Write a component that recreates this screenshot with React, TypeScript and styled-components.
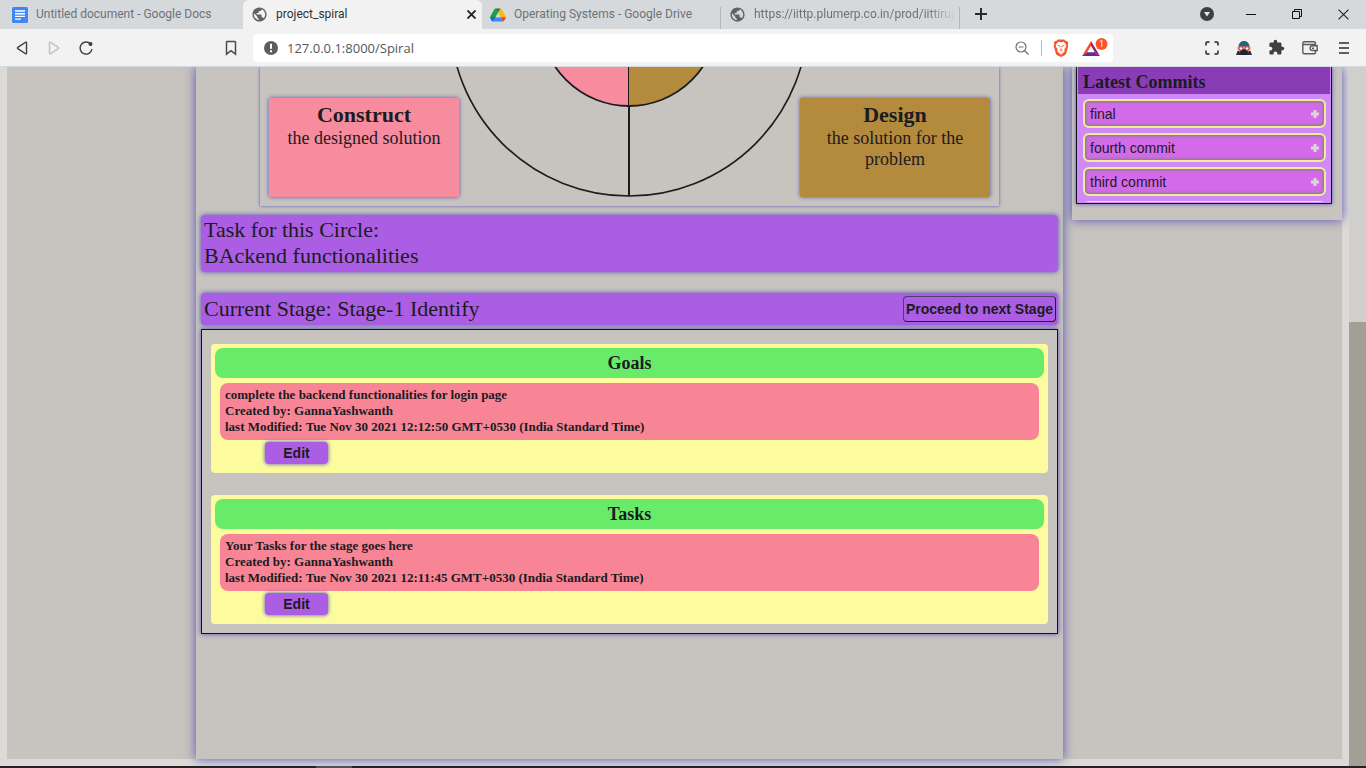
import React from "react";
import styled, { createGlobalStyle } from "styled-components";
import { MdExtension, MdPublic } from "react-icons/md";

const SERIF = '"Liberation Serif", "Times New Roman", serif';
const SANS = '"Liberation Sans", Arial, sans-serif';
const UI = '"Open Sans", "Noto Sans", sans-serif';
const TAB_FONT = 'Roboto, "Open Sans", sans-serif';

const c = {
  ink: "#1b1b22",
  stone: "#c7c3be",
  pale: "#dbdad6",
  glow: "#5450b8",
  purple: "#ab5ee3",
  pink: "#f78c9e",
  gold: "#b48a3c",
};

const GlobalStyle = createGlobalStyle`
  * { box-sizing: border-box; }
  body { margin: 0; color: ${c.ink}; font-family: ${SERIF}; background: ${c.pale}; }
  h1, h2, h3, p { margin: 0; }
  button { font: inherit; color: inherit; cursor: pointer; }
`;

const Screen = styled.div`
  display: flex;
  flex-direction: column;
  height: 100vh;
  overflow: hidden;
`;

/* ---------- browser frame ---------- */

const TabStrip = styled.div`
  display: flex;
  flex: none;
  height: 29px;
  padding-left: 4px;
  background: #d5d9dc;
`;

const Tab = styled.div<{ $active?: boolean; $divider?: boolean }>`
  display: flex;
  align-items: center;
  flex: 0 1 239px;
  min-width: 0;
  padding: 0 5px 0 8px;
  border-radius: 6px 6px 0 0;
  background: ${(p) => (p.$active ? "#f2f2f2" : "transparent")};
  background-image: ${(p) =>
    p.$divider ? "linear-gradient(#b3b7ba, #b3b7ba)" : "none"};
  background-size: 1px 22px;
  background-position: right bottom;
  background-repeat: no-repeat;
`;

const TabButton = styled.button<{ $active?: boolean; $fade?: boolean }>`
  display: flex;
  align-items: center;
  flex: 1;
  gap: 8px;
  min-width: 0;
  height: 29px;
  padding: 0;
  border: 0;
  background: none;
  overflow: hidden;
  white-space: nowrap;
  font: 12px/29px ${TAB_FONT};
  color: ${(p) => (p.$active ? "#2f3235" : "#6d7276")};
  mask-image: ${(p) =>
    p.$fade ? "linear-gradient(to right, #000 88%, transparent)" : "none"};
  svg { flex: none; }
`;

const IconButton = styled.button<{ $w: number }>`
  display: flex;
  align-items: center;
  justify-content: center;
  flex: none;
  width: ${(p) => p.$w}px;
  height: 28px;
  padding: 0;
  border: 0;
  background: none;
  color: #3c4043;
`;

const WindowControls = styled.div`
  display: flex;
  margin-left: auto;
`;

const Toolbar = styled.div`
  display: flex;
  align-items: center;
  flex: none;
  height: 38px;
  padding: 0 6px;
  background: #f2f2f2;
  border-bottom: 1px solid #d3d9de;
`;

const BookmarkSlot = styled.div`
  margin-left: 115px;
`;

const AddressBar = styled.div`
  display: flex;
  align-items: center;
  flex: 1;
  height: 28px;
  margin: 0 83px 0 8px;
  padding: 0 1px 0 11px;
  border-radius: 4px;
  background: #fff;
`;

const AddressInput = styled.input`
  flex: 1;
  min-width: 0;
  padding: 0 9px;
  border: 0;
  outline: 0;
  background: none;
  color: #53575b;
  font: 13px/20px ${UI};
`;

const AddressDivider = styled.span`
  width: 1px;
  height: 16px;
  margin: 0 2px;
  background: #bbb;
`;

/* ---------- page ---------- */

const Viewport = styled.div`
  display: flex;
  flex: 1;
  min-height: 0;
`;

const Page = styled.div`
  flex: 1;
  min-width: 0;
  padding: 0 7px 7px;
  overflow: hidden;
  background: ${c.pale};
`;

const Columns = styled.div`
  display: grid;
  grid-template-columns: 189fr 876fr 270fr;
  height: 100%;
  background: ${c.stone};
`;

const Main = styled.main`
  grid-column: 2;
  margin-right: 9px;
  padding: 0 5px;
  background: ${c.stone};
  box-shadow: 0 0 10px ${c.glow};
`;

const Spiral = styled.section`
  display: flex;
  align-items: flex-end;
  justify-content: space-between;
  width: 739px;
  max-width: 100%;
  height: 139px;
  margin: 0 auto 9px;
  padding: 0 9px 9px;
  box-shadow: 0 0 3px ${c.glow};
`;

const Quadrant = styled.article<{ $bg: string }>`
  flex: none;
  width: 190px;
  height: 99px;
  padding: 4px 16px;
  border-radius: 2px;
  background: ${(p) => p.$bg};
  box-shadow: 0 0 4px ${c.glow};
  text-align: center;
  font-size: 18px;
  line-height: 21px;
`;

const QuadrantTitle = styled.h2`
  font-size: 22px;
  line-height: 26px;
`;

const Circles = styled.svg`
  flex: none;
  width: 361px;
  height: 130px;
  margin: 0 -10px;
`;

const Banner = styled.section`
  display: flex;
  align-items: center;
  justify-content: space-between;
  padding: 2px 2px 3px 3px;
  border-radius: 4px;
  background: ${c.purple};
  box-shadow: 0 0 5px ${c.glow};
  font-size: 22px;
  line-height: 26px;
`;

const StageBanner = styled(Banner)`
  margin: 21px 0 4px;
  padding: 3px 2px 3px 3px;
`;

const BannerTitle = styled.h1`
  font-size: 22px;
  font-weight: 400;
`;

const ProceedButton = styled.button`
  height: 26px;
  padding: 0 2px;
  border: 1px solid ${c.ink};
  border-top-color: #4b3f66;
  border-left-color: #4b3f66;
  border-radius: 4px;
  background: ${c.purple};
  font: bold 14px/16px ${SANS};
`;

const StageBox = styled.section`
  display: flex;
  flex-direction: column;
  gap: 22px;
  padding: 14px 9px 9px;
  border: 1px solid #12121c;
  box-shadow: 0 0 5px ${c.glow};
`;

const Card = styled.article`
  padding: 4px 4px 9px;
  border-radius: 4px;
  background: #fcfc9f;
`;

const CardTitle = styled.h2`
  border-radius: 8px;
  background: #69eb6a;
  text-align: center;
  font-size: 18px;
  line-height: 30px;
`;

const Entry = styled.div`
  margin: 5px 5px 2px;
  padding: 4px 5px 5px;
  border-radius: 8px;
  background: #f78596;
  font-size: 13px;
  font-weight: 700;
  line-height: 16px;
`;

const EditButton = styled.button`
  display: block;
  width: 63px;
  height: 22px;
  margin-left: 50px;
  padding: 0;
  border: 0;
  border-radius: 4px;
  background: ${c.purple};
  box-shadow: 0 0 4px ${c.glow};
  font: bold 14px/22px ${SANS};
`;

const Aside = styled.aside`
  align-self: start;
  padding: 0 10px 16px 4px;
  background: ${c.stone};
  box-shadow: 0 0 10px ${c.glow};
`;

const Commits = styled.section`
  padding: 0 1px 1px;
  border: 1px solid #12121c;
  border-top: 0;
  background: #d08af7;
  box-shadow: 0 0 4px ${c.glow};
`;

const CommitsTitle = styled.h2`
  padding: 3px 5px 0;
  background: #893cb5;
  font-size: 18px;
  line-height: 24px;
`;

const CommitList = styled.ul`
  display: flex;
  flex-direction: column;
  gap: 5px;
  height: 108px;
  margin: 0;
  padding: 5px 4px 0 5px;
  overflow: hidden;
  list-style: none;
`;

const CommitButton = styled.button`
  display: flex;
  align-items: center;
  justify-content: space-between;
  width: 100%;
  height: 29px;
  padding: 0 5px;
  border: 2px solid #f0ec98;
  border-radius: 6px;
  background: #d36aea;
  box-shadow: inset 0 0 3px 1px #75876f;
  font: 14px/16px ${SANS};
`;

const ScrollTrack = styled.div`
  display: grid;
  grid-template-rows: 255fr 444fr;
  flex: none;
  width: 17px;
  background: #d0cfcc;
`;

const ScrollThumb = styled.div`
  grid-row: 2;
  background: #a39f97;
`;

const Taskbar = styled.div`
  flex: none;
  height: 2px;
  padding-left: 316px;
  background: #222326;
`;

const TaskbarMark = styled.div`
  width: 36px;
  height: 2px;
  background: #505154;
`;

/* ---------- icons ---------- */

const DocsIcon = () => (
  <svg width="16" height="16" viewBox="0 0 16 16">
    <rect width="16" height="16" rx="1.5" fill="#4285f4" />
    <path d="M3 4h10M3 6.7h10M3 9.4h10M3 12.1h6" stroke="#fff" strokeWidth="1.4" />
  </svg>
);

const DriveIcon = () => (
  <svg width="16" height="16" viewBox="0 0 16 16">
    <path d="M5.4 1.5 8 6l-2.400 4.200L3 14.500c-.5-.1-.9-.4-1.200-.8L.3 11c-.3-.5-.3-1 0-1.500L4.300 2.300c.2-.4.600-.7 1.100-.8z" fill="#1e9e4a" />
    <path d="M5.400 1.500h5.200L8 6z" fill="#188038" />
    <path d="M10.600 1.500c.5.100.9.400 1.100.8l4 7.200c.1.200.2.500.2.800h-5.200L8 6z" fill="#fbbc04" />
    <path d="M.1 10.200h5.500L3 14.500c-.5-.1-.9-.4-1.200-.8L.3 11z" fill="#1967d2" />
    <path d="M5.600 10.200h5.100l2.300 4.300H3z" fill="#4285f4" />
    <path d="M10.700 10.200h5.200c0 .3-.1.500-.2.800l-1.500 2.700c-.3.400-.7.700-1.200.8z" fill="#ea4335" />
    <path d="m8 6 2.500 4.200H5.600z" fill="#d5d9dc" />
  </svg>
);

const Globe = () => <MdPublic size={17} color="#5f6368" />;

const CloseIcon = ({ size, weight }: { size: number; weight: number }) => (
  <svg width={size} height={size} viewBox="0 0 10 10">
    <path d="m.5.5 9 9m0-9-9 9" stroke="#202124" strokeWidth={weight} />
  </svg>
);

const PlusIcon = () => (
  <svg width="12" height="12" viewBox="0 0 12 12">
    <path d="M6 0v12M0 6h12" stroke="#27292c" strokeWidth="2" />
  </svg>
);

const TabSearchIcon = () => (
  <svg width="14" height="14" viewBox="0 0 14 14">
    <circle cx="7" cy="7" r="7" fill="#3d3f41" />
    <path d="M4 5h6L7 9.5z" fill="#e6e8ea" />
  </svg>
);

const MinimizeIcon = () => (
  <svg width="10" height="10" viewBox="0 0 10 10">
    <path d="M0 5.5h10" stroke="#111" />
  </svg>
);

const RestoreIcon = () => (
  <svg width="10" height="10" viewBox="0 0 10 10" fill="none" stroke="#111">
    <path d="M.5 2.5h7v7h-7zM2.5 2.500v-2h7v7h-2" />
  </svg>
);

const BackIcon = ({ flip }: { flip?: boolean }) => (
  <svg width="14" height="16" viewBox="0 0 14 16" fill="none">
    <path
      d={
        flip
          ? "M2.500 2.800v10.400c0 .6.600.8 1 .5l7.700-5.100c.4-.3.400-.9 0-1.200L3.500 2.300c-.4-.3-1 0-1 .5z"
          : "M11.500 2.800v10.400c0 .6-.6.8-1 .5L2.800 8.600c-.4-.3-.4-.9 0-1.200l7.700-5.100c.4-.3 1 0 1 .5z"
      }
      stroke={flip ? "#bcbec0" : "#3c3f42"}
      strokeWidth="1.4"
    />
  </svg>
);

const ReloadIcon = () => (
  <svg width="16" height="16" viewBox="0 0 16 16" fill="none">
    <path d="M12.500 4A6 6 0 1 0 14 9" stroke="#3c3f42" strokeWidth="1.4" />
    <circle cx="12.500" cy="4" r="2" fill="#3c3f42" />
  </svg>
);

const BookmarkIcon = () => (
  <svg width="12" height="16" viewBox="0 0 12 16" fill="none">
    <path d="M1.500 2.200c0-.4.300-.7.700-.7h7.600c.4 0 .7.300.7.700v12L6 10.700l-4.500 3.500z" stroke="#4a4d50" strokeWidth="1.5" />
  </svg>
);

const InfoIcon = () => (
  <svg width="14" height="14" viewBox="0 0 14 14">
    <circle cx="7" cy="7" r="7" fill="#5a5e62" />
    <path d="M7 2.800v5M7 9.300v2" stroke="#fff" strokeWidth="2" />
  </svg>
);

const ZoomOutIcon = () => (
  <svg width="14" height="14" viewBox="0 0 14 14" fill="none" stroke="#6a6e72">
    <circle cx="6" cy="6" r="5" strokeWidth="1.2" />
    <path d="M3.500 6h5" />
    <path d="m9.500 9.500 4 4" strokeWidth="1.3" />
  </svg>
);

const BraveIcon = () => (
  <svg width="16" height="18" viewBox="0 0 16 19">
    <path d="M4.500.5h7l1.500 1.700 1.400-.1 1.300 2-.6 1.700.5 1.700-2 7.500c-.3 1-.8 1.500-1.600 2.100L8 19l-4-1.900c-.8-.6-1.300-1.100-1.600-2.100l-2-7.500.5-1.700-.6-1.700 1.300-2 1.400.1z" fill="#fb542b" />
    <path d="m8 3.400 2.500-.5 2.400 2.200.7 2.600-2 3.200.2 2.400L8 16.500l-3.800-3.200.2-2.400-2-3.200.7-2.600 2.400-2.200z" fill="#fff" />
    <path d="m4.500 6.700 2.300.7.200 1.400M11.500 6.700l-2.300.7L9 8.800M6.300 12.600 8 11.600l1.700 1M8 9.500v2" stroke="#fb542b" strokeWidth=".9" fill="none" />
  </svg>
);

const RewardsIcon = () => (
  <svg width="26" height="20" viewBox="0 0 26 20">
    <path d="M9 3v5l-3.600 6L0 18z" fill="#ff4724" />
    <path d="M9 3v5l3.600 6L18 18z" fill="#9e1f63" />
    <path d="m0 18 5.400-4h7.200L18 18z" fill="#662d91" />
    <path d="m9 8 3.500 6.200h-7z" fill="#fff" />
    <circle cx="19.500" cy="6" r="6" fill="#fb542b" />
    <text x="19.500" y="9" fontSize="9" textAnchor="middle" fill="#fff" fontFamily="Open Sans, sans-serif">1</text>
  </svg>
);

const BracketsIcon = () => (
  <svg width="14" height="14" viewBox="0 0 14 14" fill="none" stroke="#222" strokeWidth="1.5">
    <path d="M1 4.500V2.200C1 1.500 1.500 1 2.200 1h2.300M9.500 1h2.300c.7 0 1.200.5 1.200 1.200v2.300M13 9.500v2.300c0 .7-.5 1.200-1.200 1.200H9.500M4.500 13H2.200C1.500 13 1 12.500 1 11.800V9.500" />
  </svg>
);

const AvatarIcon = () => (
  <svg width="16" height="16" viewBox="0 0 16 16">
    <path d="M0 15l1.500-4h13l1.500 4z" fill="#2c333d" />
    <path d="M2.300 8C2.300 3.500 4.700 1 8 1s5.700 2.500 5.700 7z" fill="#27647a" />
    <path d="M1.500 6.500h13V10L12 12H4l-2.500-2z" fill="#ef8a78" />
    <path d="M4 10.500 8 9l4 1.500-1 4.500H5z" fill="#1d2530" />
    <circle cx="5" cy="8.500" r="1.800" fill="#fff" stroke="#c93a36" />
    <circle cx="11" cy="8.500" r="1.800" fill="#fff" stroke="#c93a36" />
  </svg>
);

const WalletIcon = () => (
  <svg width="16" height="14" viewBox="0 0 16 14" fill="none" stroke="#565a5e" strokeWidth="1.4">
    <path d="M13.500 4.500V2.300c0-.8-.6-1.500-1.500-1.500H2.300C1.400.8.8 1.400.8 2.300v8.900c0 .9.6 1.500 1.500 1.500H12c.9 0 1.500-.6 1.500-1.500V10M.8 3.500h12.700" />
    <path d="M15.200 4.800h-4.700a2.300 2.300 0 0 0 0 4.700h4.700zM10 7.200h2" />
  </svg>
);

const MenuIcon = () => (
  <svg width="10" height="12" viewBox="0 0 10 12">
    <path d="M0 1h10M0 6h10M0 11h10" stroke="#5c6064" strokeWidth="2" />
  </svg>
);

const CommitPlus = () => (
  <svg width="8" height="8" viewBox="0 0 8 8">
    <path d="M4 0v8M0 4h8" stroke="#dcd6dc" strokeWidth="3" />
  </svg>
);

/* ---------- data ---------- */

const commits = ["final", "fourth commit", "third commit"];

const stageCards = [
  {
    title: "Goals",
    text: "complete the backend functionalities for login page",
    author: "GannaYashwanth",
    modified: "Tue Nov 30 2021 12:12:50 GMT+0530 (India Standard Time)",
  },
  {
    title: "Tasks",
    text: "Your Tasks for the stage goes here",
    author: "GannaYashwanth",
    modified: "Tue Nov 30 2021 12:11:45 GMT+0530 (India Standard Time)",
  },
];

export default function App() {
  return (
    <Screen>
      <GlobalStyle />
      <TabStrip>
        <Tab>
          <TabButton><DocsIcon />Untitled document - Google Docs</TabButton>
        </Tab>
        <Tab $active>
          <TabButton $active><Globe />project_spiral</TabButton>
          <IconButton $w={12} aria-label="Close tab"><CloseIcon size={9} weight={2} /></IconButton>
        </Tab>
        <Tab $divider>
          <TabButton><DriveIcon />Operating Systems - Google Drive</TabButton>
        </Tab>
        <Tab $divider>
          <TabButton $fade><Globe />https://iittp.plumerp.co.in/prod/iittirup</TabButton>
        </Tab>
        <IconButton $w={42} aria-label="New tab"><PlusIcon /></IconButton>
        <WindowControls>
          <IconButton $w={42} aria-label="Search tabs"><TabSearchIcon /></IconButton>
          <IconButton $w={46} aria-label="Minimize"><MinimizeIcon /></IconButton>
          <IconButton $w={46} aria-label="Restore"><RestoreIcon /></IconButton>
          <IconButton $w={46} aria-label="Close window"><CloseIcon size={11} weight={1} /></IconButton>
        </WindowControls>
      </TabStrip>

      <Toolbar>
        <IconButton $w={32} aria-label="Back"><BackIcon /></IconButton>
        <IconButton $w={32} aria-label="Forward"><BackIcon flip /></IconButton>
        <IconButton $w={32} aria-label="Reload"><ReloadIcon /></IconButton>
        <BookmarkSlot>
          <IconButton $w={28} aria-label="Bookmark"><BookmarkIcon /></IconButton>
        </BookmarkSlot>
        <AddressBar>
          <InfoIcon />
          <AddressInput aria-label="Address" defaultValue="127.0.0.1:8000/Spiral" />
          <IconButton $w={34} aria-label="Zoom"><ZoomOutIcon /></IconButton>
          <AddressDivider />
          <IconButton $w={34} aria-label="Shields"><BraveIcon /></IconButton>
          <IconButton $w={34} aria-label="Rewards"><RewardsIcon /></IconButton>
        </AddressBar>
        <IconButton $w={32} aria-label="Capture"><BracketsIcon /></IconButton>
        <IconButton $w={32} aria-label="Profile"><AvatarIcon /></IconButton>
        <IconButton $w={32} aria-label="Extensions"><MdExtension size={17} /></IconButton>
        <IconButton $w={36} aria-label="Wallet"><WalletIcon /></IconButton>
        <IconButton $w={32} aria-label="Menu"><MenuIcon /></IconButton>
      </Toolbar>

      <Viewport>
        <Page>
          <Columns>
            <Main>
              <Spiral>
                <Quadrant $bg={c.pink}>
                  <QuadrantTitle>Construct</QuadrantTitle>
                  <p>the designed solution</p>
                </Quadrant>
                <Circles viewBox="0 0 361 130" aria-hidden="true">
                  <path d="M180-50v89a89 89 0 0 1-89-89z" fill={c.pink} />
                  <path d="M180-50v89a89 89 0 0 0 89-89z" fill={c.gold} />
                  <g fill="none" stroke="#1c1c1c">
                    <circle cx="180" cy="-50" r="89" strokeWidth="1.8" />
                    <circle cx="180" cy="-50" r="179" strokeWidth="1.600" />
                    <path d="M179.500 0v39" />
                    <path d="M180 39v90" strokeWidth="2" />
                  </g>
                </Circles>
                <Quadrant $bg={c.gold}>
                  <QuadrantTitle>Design</QuadrantTitle>
                  <p>the solution for the problem</p>
                </Quadrant>
              </Spiral>

              <Banner>
                <div>
                  <BannerTitle>Task for this Circle:</BannerTitle>
                  <p>BAckend functionalities</p>
                </div>
              </Banner>

              <StageBanner>
                <BannerTitle>Current Stage: Stage-1 Identify</BannerTitle>
                <ProceedButton>Proceed to next Stage</ProceedButton>
              </StageBanner>

              <StageBox>
                {stageCards.map((card) => (
                  <Card key={card.title}>
                    <CardTitle>{card.title}</CardTitle>
                    <Entry>
                      <p>{card.text}</p>
                      <p>Created by: {card.author}</p>
                      <p>last Modified: {card.modified}</p>
                    </Entry>
                    <EditButton>Edit</EditButton>
                  </Card>
                ))}
              </StageBox>
            </Main>

            <Aside>
              <Commits>
                <CommitsTitle>Latest Commits</CommitsTitle>
                <CommitList>
                  {commits.map((name) => (
                    <li key={name}>
                      <CommitButton>{name}<CommitPlus /></CommitButton>
                    </li>
                  ))}
                  {/* top edge of the next entry, scrolled out of the list */}
                  <li aria-hidden="true"><CommitButton as="div" /></li>
                </CommitList>
              </Commits>
            </Aside>
          </Columns>
        </Page>
        <ScrollTrack><ScrollThumb /></ScrollTrack>
      </Viewport>
      <Taskbar><TaskbarMark /></Taskbar>
    </Screen>
  );
}
